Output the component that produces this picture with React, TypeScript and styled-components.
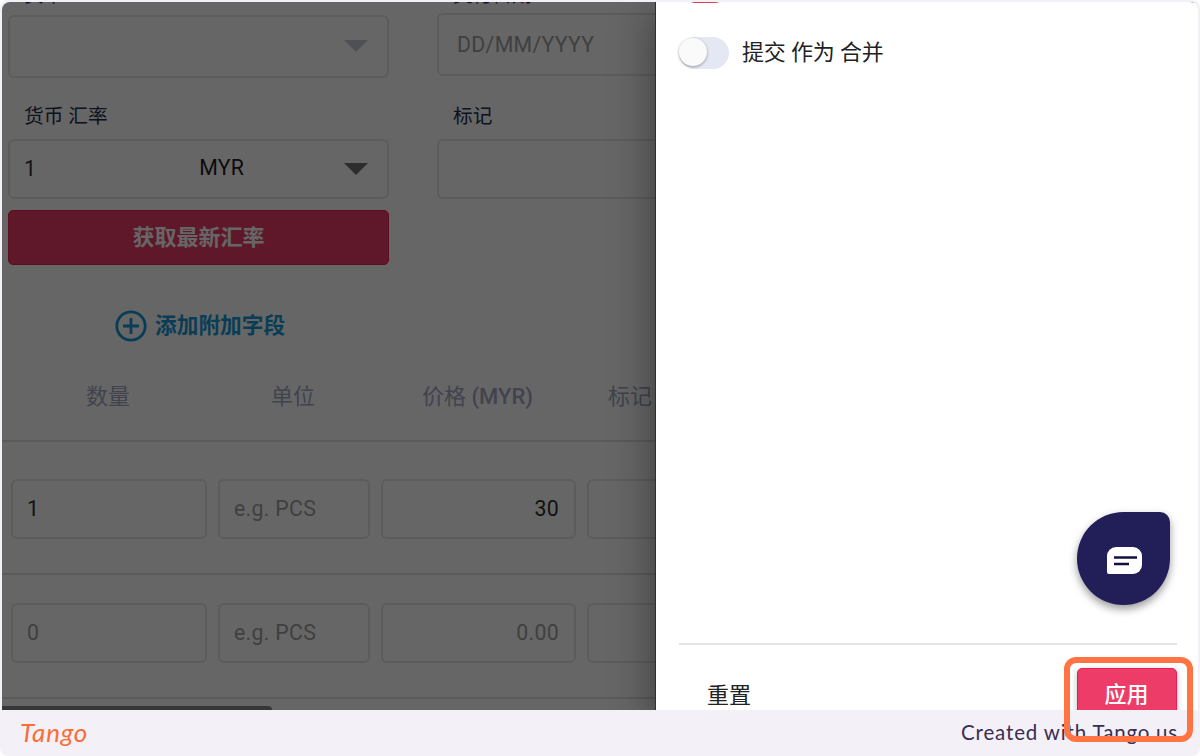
import React from 'react'
import styled, { createGlobalStyle } from 'styled-components'

const GlobalStyle = createGlobalStyle`
  * {
    box-sizing: border-box;
  }

  body {
    margin: 0;
    background: #fff;
    font-family: Roboto, 'Noto Sans CJK SC', sans-serif;
    color: #222;
  }
`

const Frame = styled.main`
  position: relative;
  width: 1200px;
  height: 756px;
  padding: 2px 2px 0;
  display: flex;
  flex-direction: column;
  background: #f3f1f7;
  border-radius: 8px;
  overflow: hidden;
`

const Screen = styled.div`
  height: 708px;
  display: flex;
  border-radius: 8px 8px 0 0;
  overflow: hidden;
  background: #fff;
`

const FormPane = styled.section`
  position: relative;
  width: 654px;
  flex: none;
  overflow: hidden;
  display: flex;
  flex-direction: column;

  &::after {
    content: '';
    position: absolute;
    inset: 0;
    background: rgba(0, 0, 0, 0.6);
  }
`

const Fields = styled.div`
  display: grid;
  grid-template-columns: 381px 400px;
  column-gap: 48px;
  padding-left: 6px;
  margin-top: -26px;
`

const RateFields = styled(Fields)`
  margin-top: 23px;
`

const Field = styled.div`
  display: flex;
  flex-direction: column;
`

const Label = styled.label<{ $height: number; $line?: number }>`
  height: ${p => p.$height}px;
  padding-left: 16px;
  font-size: 19.7px;
  line-height: ${p => p.$line || 32}px;
  color: #262d49;
  white-space: nowrap;
`

const Box = styled.div<{ $height?: number; $muted?: boolean; $end?: boolean }>`
  height: ${p => p.$height || 60}px;
  border: 2px solid #e6e6e6;
  border-radius: 6px;
  padding: 0 15px 1px 14px;
  display: flex;
  align-items: center;
  justify-content: ${p => (p.$end ? 'flex-end' : 'flex-start')};
  font-size: 21.3px;
  letter-spacing: 0.3px;
  color: ${p => (p.$muted ? '#a0a0a2' : '#303030')};
`

const DateBox = styled(Box)`
  padding-left: 18px;
`

const Currency = styled.span`
  margin-left: 163px;
  padding-bottom: 3px;
  letter-spacing: 0.2px;
  color: #222;
`

const Caret = styled.span<{ $color: string }>`
  margin-left: auto;
  margin-right: 4px;
  border: 12px solid transparent;
  border-top-color: ${p => p.$color};
  border-bottom: 0;
`

const RateButton = styled.button`
  height: 55px;
  margin-top: 11px;
  border: 1px solid #eb1e50;
  border-radius: 5px;
  background: #ed3c67;
  color: #fff;
  font: 700 22px Roboto, 'Noto Sans CJK SC', sans-serif;
  padding: 0 0 6px;
`

const AddField = styled.a`
  display: flex;
  align-items: center;
  gap: 8px;
  margin: 44px 0 0 113px;
  height: 33px;
  font-size: 21.7px;
  font-weight: 700;
  color: #1899d6;
`

const AddText = styled.span`
  padding-bottom: 5px;
`

const Table = styled.div`
  width: 900px;
  margin-top: 20px;
`

const HeadRow = styled.div`
  display: grid;
  grid-template-columns: 212px 158px 211px 94px;
  height: 80px;
  align-items: center;
  padding-bottom: 15px;
  border-bottom: 2px solid #e0e0e0;
  text-align: center;
  font-size: 22px;
  font-weight: 500;
  color: #a2a9c4;

  & span {
    font-weight: 400;
  }
`

const ItemRow = styled.div<{ $height: number; $top: number }>`
  display: grid;
  grid-template-columns: 196px 152px 195px 196px;
  column-gap: 11px;
  align-items: start;
  height: ${p => p.$height}px;
  padding: ${p => p.$top}px 0 0 9px;
  border-bottom: 2px solid #e0e0e0;
`

const ScrollBar = styled.div`
  width: 270px;
  height: 12px;
  margin-top: 7px;
  border-radius: 0 6px 0 0;
  background: #8c8a89;
`

const Drawer = styled.aside`
  position: relative;
  flex: 1;
  display: flex;
  flex-direction: column;
  padding: 0 21px 0 23px;
  background: #fff;
  box-shadow: -1px 0 0 #303030, 0 11px 14px -7px rgba(0, 0, 0, 0.2),
    0 22px 33px 3px rgba(0, 0, 0, 0.15), 0 8px 41px 7px rgba(0, 0, 0, 0.2);
`

const PreviousToggle = styled.div`
  flex: none;
  width: 36px;
  height: 20px;
  margin: -19px 0 0 8px;
  border-radius: 8px;
  background: #dc3f4d;
`

const ToggleRow = styled.label`
  display: flex;
  align-items: center;
  gap: 12px;
  height: 40px;
  margin-top: 30px;
  font-size: 22px;
  color: #222;
`

const Track = styled.span`
  width: 50px;
  height: 32px;
  border-radius: 16px;
  background: #e3e8f3;
`

const Knob = styled.span`
  display: block;
  width: 28px;
  height: 28px;
  margin: 1px 0;
  border-radius: 50%;
  background: #fafafa;
  box-shadow: 0 1px 3px rgba(0, 0, 0, 0.35);
`

const ToggleText = styled.span`
  padding-bottom: 7px;
  padding-left: 1px;
  letter-spacing: -0.15px;
`

const ChatButton = styled.button`
  width: 93px;
  height: 93px;
  margin: auto 7px 38px auto;
  padding: 3px 0 0 2px;
  border: 0;
  border-radius: 50% 10px 50% 50%;
  background: #221e58;
  box-shadow: 0 4px 9px rgba(0, 0, 0, 0.4);
  display: grid;
  place-items: center;
`

const Actions = styled.footer`
  display: flex;
  justify-content: space-between;
  height: 67px;
  padding-top: 23px;
  border-top: 2px solid #e4e4e4;
  flex: none;
`

const Reset = styled.button`
  height: 52px;
  margin-left: 28px;
  padding: 0 0 3px;
  border: 0;
  background: none;
  font: 22px 'Noto Sans CJK SC', sans-serif;
  color: #222;
`

const Apply = styled.button`
  width: 100px;
  height: 54px;
  border: 1px solid #eb1e50;
  border-radius: 5px;
  background: #ee3c68;
  box-shadow: 0 2px 6px rgba(0, 0, 0, 0.25);
  color: #fff;
  font: 500 22px 'Noto Sans CJK SC', sans-serif;
  padding: 0 1px 7px 0;
`

const Credit = styled.footer`
  flex: 1;
  display: flex;
  justify-content: space-between;
  padding: 0 20px 2px 18px;
  align-items: center;
`

const Brand = styled.span`
  font: italic 400 26px Lato, sans-serif;
  color: #fc6d35;
  letter-spacing: 0.8px;
`

const CreditText = styled.span`
  font: 20.5px Lato, sans-serif;
  letter-spacing: 0.85px;
  color: #3b2e52;
`

const Highlight = styled.div`
  position: absolute;
  left: 1064px;
  top: 657px;
  width: 129px;
  height: 85px;
  border: 6px solid #ff7442;
  border-radius: 12px;
`

const PlusIcon = () => (
  <svg width="32" height="32" viewBox="0 0 32 32" fill="none" stroke="currentColor" strokeWidth="2.8">
    <circle cx="16" cy="16" r="14.2" />
    <path d="M16 8v16M8 16h16" />
  </svg>
)

const ChatIcon = () => (
  <svg width="37" height="29" viewBox="0 0 37 29">
    <path d="M10 1h17a9 9 0 0 1 9 9v9a9 9 0 0 1-9 9H3a2 2 0 0 1-2-2V10a9 9 0 0 1 9-9z" fill="#fff" />
    <path d="M8 11.5h23M8 18h15" stroke="#14103f" strokeWidth="2.6" />
  </svg>
)

const items = [
  { qty: '1', price: '30', muted: false, height: 133, top: 37 },
  { qty: '0', price: '0.00', muted: true, height: 124, top: 28 },
]

const App = () => (
  <>
    <GlobalStyle />
    <Frame>
      <Screen>
        <FormPane>
          <Fields>
            <Field>
              <Label $height={39} $line={40}>货币</Label>
              <Box $height={63}><Caret $color='#c3c8d2' /></Box>
            </Field>
            <Field>
              <Label $height={37} $line={40}>交付日期</Label>
              <DateBox $height={63} $muted>DD/MM/YYYY</DateBox>
            </Field>
          </Fields>
          <RateFields>
            <Field>
              <Label $height={38}>货币 汇率</Label>
              <Box>
                1
                <Currency>MYR</Currency>
                <Caret $color='#707070' />
              </Box>
              <RateButton>获取最新汇率</RateButton>
            </Field>
            <Field>
              <Label $height={38}>标记</Label>
              <Box />
            </Field>
          </RateFields>
          <AddField>
            <PlusIcon />
            <AddText>添加附加字段</AddText>
          </AddField>
          <Table>
            <HeadRow>
              <span>数量</span>
              <span>单位</span>
              <div><span>价格</span> (MYR)</div>
              <span>标记</span>
            </HeadRow>
            {items.map(item => (
              <ItemRow key={item.qty} $height={item.height} $top={item.top}>
                <Box $muted={item.muted}>{item.qty}</Box>
                <Box $muted>e.g. PCS</Box>
                <Box $muted={item.muted} $end>{item.price}</Box>
                <Box />
              </ItemRow>
            ))}
          </Table>
          <ScrollBar />
        </FormPane>
        <Drawer>
          <PreviousToggle />
          <ToggleRow>
            <Track><Knob /></Track>
            <ToggleText>提交 作为 合并</ToggleText>
          </ToggleRow>
          <ChatButton aria-label='Chat'><ChatIcon /></ChatButton>
          <Actions>
            <Reset>重置</Reset>
            <Apply>应用</Apply>
          </Actions>
        </Drawer>
      </Screen>
      <Credit>
        <Brand>Tango</Brand>
        <CreditText>Created with Tango.us</CreditText>
      </Credit>
      <Highlight />
    </Frame>
  </>
)

export default App
